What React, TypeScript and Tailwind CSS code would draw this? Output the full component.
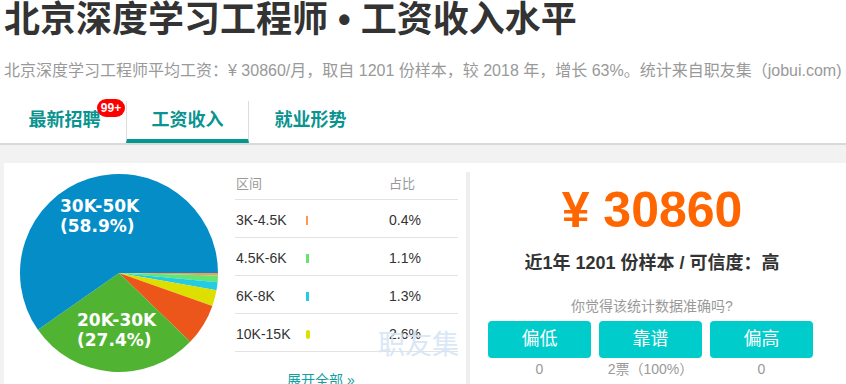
import React from 'react';

const FONT = '"Liberation Sans", "Noto Sans CJK SC", sans-serif';

const cx = 115;
const cy = 110;
const r = 99;

const slices = [
  { from: 0, to: 1.4, color: '#FF9655' },
  { from: 1.4, to: 5.4, color: '#64E572' },
  { from: 5.4, to: 10.1, color: '#24CBE5' },
  { from: 10.1, to: 19.4, color: '#DDDF00' },
  { from: 19.4, to: 44, color: '#ED561B' },
  { from: 44, to: 145, color: '#50B432' },
  { from: 145, to: 360, color: '#058DC7' },
];

const arcPath = (a0: number, a1: number) => {
  const pt = (a: number) => [cx + r * Math.cos((a * Math.PI) / 180), cy + r * Math.sin((a * Math.PI) / 180)];
  const [x0, y0] = pt(a0);
  const [x1, y1] = pt(a1);
  const large = a1 - a0 > 180 ? 1 : 0;
  return `M${cx},${cy} L${x0},${y0} A${r},${r} 0 ${large} 1 ${x1},${y1} Z`;
};

const rows = [
  { range: '3K-4.5K', pct: '0.4%', bar: 'bg-[#FF9655] w-[2px]' },
  { range: '4.5K-6K', pct: '1.1%', bar: 'bg-[#64E572] w-[3px]' },
  { range: '6K-8K', pct: '1.3%', bar: 'bg-[#24CBE5] w-[3px]' },
  { range: '10K-15K', pct: '2.6%', bar: 'bg-[#DDDF00] w-[4px] rounded-[2px]' },
];

const votes = [
  { label: '偏低', count: '0' },
  { label: '靠谱', count: '2票（100%）' },
  { label: '偏高', count: '0' },
];

const PieChart = () => (
  <svg width={231} height={220} className="shrink-0">
    {slices.map(s => (
      <path key={s.color} d={arcPath(s.from, s.to)} fill={s.color} />
    ))}
    <g fill="#fff" fontWeight="bold" fontSize="17" fontFamily='"DejaVu Sans", sans-serif'>
      <text x={56} y={49}>30K-50K</text>
      <text x={56} y={69}>(58.9%)</text>
      <text x={73} y={163}>20K-30K</text>
      <text x={73} y={183}>(27.4%)</text>
    </g>
  </svg>
);

export default function App() {
  return (
    <div className="w-[846px] h-[384px] overflow-hidden bg-white" style={{ fontFamily: FONT }}>
      {/* Title */}
      <h1 className="px-[4px] text-[36px] leading-[40px] font-bold text-[#333] whitespace-nowrap">
        北京深度学习工程师<span className="mx-[10px]">•</span>工资收入水平
      </h1>
      <p className="mt-[20px] px-[4px] text-[16px] leading-[22px] text-[#999] whitespace-nowrap">
        北京深度学习工程师平均工资：¥ 30860/月，取自 1201 份样本，较 2018 年，增长 63%。统计来自职友集（jobui.com)
      </p>

      {/* Tabs */}
      <div className="mt-[19px] flex pl-[3px]">
        <div className="relative w-[123px] h-[42px] flex items-center justify-center border-b-[4px] border-transparent text-[18px] font-bold text-[#0a9490]">
          最新招聘
          <span className="absolute left-[94px] top-[-2px] w-[28px] h-[18px] rounded-full bg-[#f00] text-white text-[12px] leading-[18px] font-bold text-center">
            99+
          </span>
        </div>
        <div className="w-[123px] h-[42px] flex items-center justify-center border-x border-[#ddd] border-b-[4px] border-b-[#00978f] text-[18px] font-bold text-[#0a9490]">
          工资收入
        </div>
        <div className="w-[123px] h-[42px] flex items-center justify-center border-b-[4px] border-transparent text-[18px] font-bold text-[#0a9490]">
          就业形势
        </div>
      </div>
      <div className="h-[2px] bg-[#d9d9d9]" />

      {/* Body */}
      <div className="bg-[#f2f2f2] pt-[18px] pl-[4px]">
        <div className="bg-white flex h-[240px]">
          {/* Left: pie + table */}
          <div className="relative w-[462px] flex">
            <PieChart />
            <div className="w-[223px]">
              <div className="flex pt-[11px] pb-[5px] leading-[20px] text-[13px] text-[#999] border-b border-[#e3e3e3]">
                <span className="w-[154px] pl-[1px]">区间</span>
                <span>占比</span>
              </div>
              {rows.map(row => (
                <div key={row.range} className="flex items-center h-[38px] pt-[3px] border-b border-[#e3e3e3] text-[14px] text-[#333]">
                  <span className="w-[71px] pl-[1px]">{row.range}</span>
                  <span className="w-[83px] flex">
                    <span className={`h-[9px] ${row.bar}`} />
                  </span>
                  <span>{row.pct}</span>
                </div>
              ))}
              <div className="mt-[18px] ml-[52px] text-[14px] leading-[20px] text-[#13a0a0]">展开全部 »</div>
            </div>
            <span className="absolute left-[374px] top-[169px] text-[27px] leading-[27px] text-[#d5e5f6] opacity-90">职友集</span>
          </div>

          {/* Right: average salary */}
          <div className="mt-[9px] w-[368px] border-l-[4px] border-[#eee] text-center">
            <div className="pt-[13px] text-[50px] leading-[50px] font-bold text-[#ff6600]">¥ 30860</div>
            <div className="mt-[15px] text-[18px] leading-[26px] font-bold text-[#333]">近1年 1201 份样本 / 可信度：高</div>
            <div className="mt-[20px] text-[14px] leading-[20px] text-[#999]">你觉得该统计数据准确吗?</div>
            <div className="mt-[5px] flex gap-[8px] pl-[18px]">
              {votes.map(v => (
                <div key={v.label} className="w-[103px]">
                  <div className="h-[37px] rounded-[4px] bg-[#00cccc] text-white text-[18px] leading-[37px]">{v.label}</div>
                  <div className="mt-[1px] text-[14px] leading-[20px] text-[#999]">{v.count}</div>
                </div>
              ))}
            </div>
          </div>
        </div>
      </div>
    </div>
  );
}
